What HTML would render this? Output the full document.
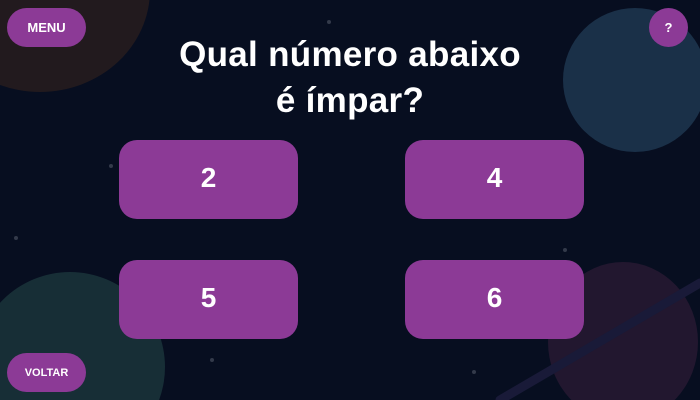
<!DOCTYPE html>
<html><head><meta charset="utf-8"><style>
html,body{margin:0;width:700px;height:400px;overflow:hidden}
#w{position:relative;width:700px;height:400px;overflow:hidden;background:#070e20;font-family:"Liberation Sans",sans-serif}
.b{position:absolute;background:#8c3a96;color:#fff;font-weight:bold;display:flex;align-items:center;justify-content:center}
.big{width:179px;height:79px;border-radius:18px;font-size:28px;padding-bottom:4px;box-sizing:border-box}
.sm{height:39px;border-radius:20px;font-size:13px}
h1{position:absolute;top:32px;left:0;width:700px;margin:0;text-align:center;color:#fff;font-size:35px;line-height:46px;font-weight:bold;letter-spacing:.3px}
</style></head><body><div id="w">
<svg width="700" height="400" style="position:absolute;left:0;top:0">
<ellipse cx="40" cy="-10" rx="110" ry="102" fill="#221a1e"/>
<circle cx="635" cy="80" r="72" fill="#1a3048"/>
<circle cx="70" cy="367" r="95" fill="#172e36"/>
<ellipse cx="623" cy="342" rx="75" ry="80" fill="#22172f"/>
<line x1="500" y1="400" x2="700" y2="283" stroke="#191a38" stroke-width="9" stroke-linecap="round"/>
<g fill="#333a4a"><circle cx="329" cy="22" r="2"/><circle cx="111" cy="166" r="2"/><circle cx="565" cy="250" r="2"/><circle cx="474" cy="372" r="2"/><circle cx="16" cy="238" r="2"/><circle cx="212" cy="360" r="2"/></g>
</svg>
<div class="b sm" style="left:7px;top:8px;width:79px">MENU</div>
<div class="b sm" style="left:649px;top:8px;width:39px">?</div>
<div class="b sm" style="left:7px;top:353px;width:79px;font-size:11px">VOLTAR</div>
<h1>Qual número abaixo<br>é ímpar?</h1>
<div class="b big" style="left:119px;top:140px">2</div>
<div class="b big" style="left:405px;top:140px">4</div>
<div class="b big" style="left:119px;top:260px">5</div>
<div class="b big" style="left:405px;top:260px">6</div>
</div></body></html>
